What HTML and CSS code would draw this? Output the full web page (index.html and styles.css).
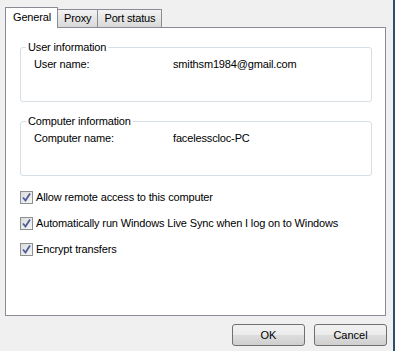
FILE: index.html
```html
<!DOCTYPE html>
<html lang="en">
<head>
    <meta charset="UTF-8">
    <title>Windows Live Sync Options</title>
    <link rel="stylesheet" href="styles.css">
</head>
<body>
    <div class="dialog">
        <div class="tabs">
            <div class="tab selected">General</div>
            <div class="tab">Proxy</div>
            <div class="tab">Port status</div>
        </div>
        <div class="panel">
            <fieldset class="group">
                <legend>User information</legend>
                <div class="row">
                    <span class="key">User name:</span>
                    <span>smithsm1984@gmail.com</span>
                </div>
            </fieldset>
            <fieldset class="group">
                <legend>Computer information</legend>
                <div class="row">
                    <span class="key">Computer name:</span>
                    <span>facelesscloc-PC</span>
                </div>
            </fieldset>
            <div class="options">
                <label class="check">
                    <span class="box"><svg width="11" height="11" viewBox="0 0 11 11"><path d="M2 5.5 L4.5 8.5 L9 1.5" fill="none" stroke="#4a5d9a" stroke-width="1.8"/></svg></span>
                    Allow remote access to this computer
                </label>
                <label class="check">
                    <span class="box"><svg width="11" height="11" viewBox="0 0 11 11"><path d="M2 5.5 L4.5 8.5 L9 1.5" fill="none" stroke="#4a5d9a" stroke-width="1.8"/></svg></span>
                    Automatically run Windows Live Sync when I log on to Windows
                </label>
                <label class="check">
                    <span class="box"><svg width="11" height="11" viewBox="0 0 11 11"><path d="M2 5.5 L4.5 8.5 L9 1.5" fill="none" stroke="#4a5d9a" stroke-width="1.8"/></svg></span>
                    Encrypt transfers
                </label>
            </div>
        </div>
        <div class="buttons">
            <button>OK</button>
            <button>Cancel</button>
        </div>
    </div>
</body>
</html>
```

FILE: styles.css
```css
body {
    margin: 0;
    width: 395px;
    height: 351px;
    background-color: #f0f0f0;
    font-family: "Liberation Sans", Arial, sans-serif;
    font-size: 11px;
    letter-spacing: -0.15px;
    color: #000;
    overflow: hidden;
}
.dialog {
    box-sizing: border-box;
    width: 395px;
    height: 351px;
    padding: 7px 0 0 5px;
    border-right: 2px solid #2d4d74;
}
.tabs {
    display: flex;
    align-items: flex-end;
    height: 20px;
    position: relative;
    z-index: 1;
}
.tab {
    box-sizing: border-box;
    height: 18px;
    padding: 0 6px;
    line-height: 17px;
    border: 1px solid #898c95;
    border-bottom: none;
    margin-left: -1px;
    background: linear-gradient(#f3f3f3, #e6e6e6 50%, #d9d9d9);
}
.tab:first-child {
    margin-left: 0;
}
.tab.selected {
    height: 21px;
    margin-bottom: -1px;
    padding: 0 6px 0 7px;
    line-height: 18px;
    background: #fff;
}
.panel {
    box-sizing: border-box;
    width: 381px;
    height: 289px;
    background: #fff;
    border: 1px solid #898c95;
    padding-top: 13px;
}
.group {
    margin: 0 13px 13px 14px;
    padding: 4px 13px 0;
    height: 55px;
    border: 1px solid #d5dfe5;
    border-radius: 3px;
}
.group legend {
    padding: 0 2px;
    margin-left: -8px;
    line-height: 13px;
}
.row {
    display: flex;
    line-height: 13px;
}
.key {
    width: 139px;
}
.options {
    display: flex;
    flex-direction: column;
    gap: 13px;
    padding: 2px 0 0 14px;
}
.check {
    display: flex;
    align-items: center;
    gap: 3px;
    line-height: 13px;
}
.box {
    box-sizing: border-box;
    width: 13px;
    height: 13px;
    border: 1px solid #8e8f8f;
    background: linear-gradient(135deg, #dcdcdc, #f6f6f6);
    display: flex;
    align-items: center;
    justify-content: center;
}
.buttons {
    display: flex;
    justify-content: flex-end;
    gap: 9px;
    padding: 8px 6px 0 0;
}
button {
    width: 73px;
    height: 22px;
    font: inherit;
    color: #000;
    border: 1px solid #707070;
    border-radius: 3px;
    background: linear-gradient(#f2f2f2, #ebebeb 50%, #dddddd 51%, #cfcfcf);
    padding: 0;
}
```
